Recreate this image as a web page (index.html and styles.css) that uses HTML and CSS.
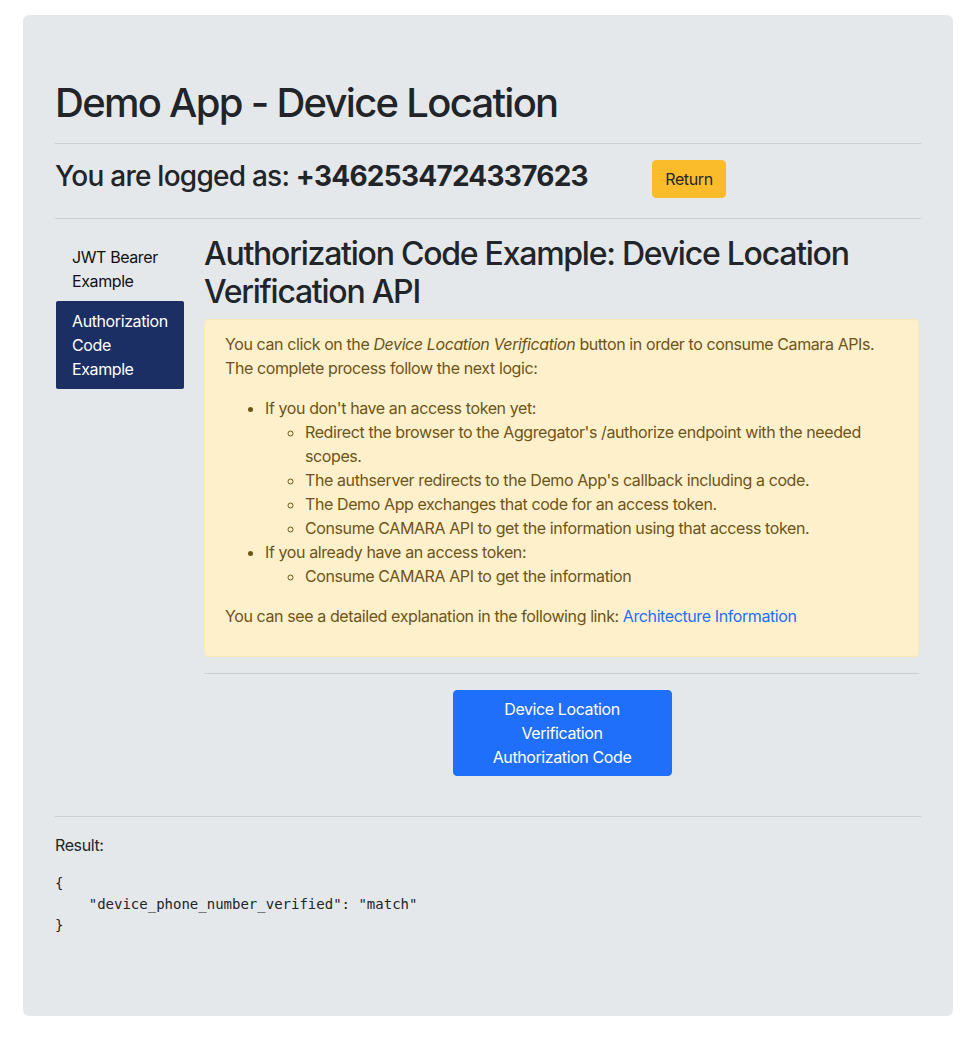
FILE: index.html
```html
<!DOCTYPE html>
<html lang="en">
<head>
<meta charset="utf-8">
<title>Demo App - Device Location</title>
<link rel="stylesheet" href="styles.css">
</head>
<body>
<div class="card">
  <h1 class="title">Demo App - Device Location</h1>
  <hr class="rule">
  <div class="user-row">
    <h3 class="user">You are logged as: <strong>+3462534724337623</strong></h3>
    <button class="btn btn-return">Return</button>
  </div>
  <hr class="rule">
  <div class="main">
    <nav class="pills">
      <a class="pill">JWT Bearer Example</a>
      <a class="pill active">Authorization Code Example</a>
    </nav>
    <section class="content">
      <h2 class="subtitle">Authorization Code Example: Device Location Verification API</h2>
      <div class="alert">
        <p>You can click on the <em>Device Location Verification</em> button in order to consume Camara APIs. The complete process follow the next logic:</p>
        <ul class="steps">
          <li>If you don't have an access token yet:
            <ul class="sub">
              <li>Redirect the browser to the Aggregator's /authorize endpoint with the needed scopes.</li>
              <li>The authserver redirects to the Demo App's callback including a code.</li>
              <li>The Demo App exchanges that code for an access token.</li>
              <li>Consume CAMARA API to get the information using that access token.</li>
            </ul>
          </li>
          <li>If you already have an access token:
            <ul class="sub">
              <li>Consume CAMARA API to get the information</li>
            </ul>
          </li>
        </ul>
        <p>You can see a detailed explanation in the following link: <a class="link">Architecture Information</a></p>
      </div>
      <hr class="rule">
      <div class="actions">
        <button class="btn btn-primary">Device Location Verification Authorization Code</button>
      </div>
    </section>
  </div>
  <hr class="rule">
  <p class="result-label">Result:</p>
  <pre class="result">{
    "device_phone_number_verified": "match"
}</pre>
</div>
</body>
</html>
```

FILE: styles.css
```css
* { box-sizing: border-box; }
html, body { margin: 0; padding: 0; }
body {
  background: #ffffff;
  font-family: "Inter", "Liberation Sans", sans-serif;
  font-size: 16px;
  line-height: 24px;
  letter-spacing: -0.025em;
  color: #212529;
}
.card {
  margin: 15px 0 0 23px;
  width: 930px;
  background: #e5e8eb;
  border-radius: 6px;
  padding: 64px 32px 48px 32px;
}
.title {
  font-size: 40px;
  line-height: 48px;
  font-weight: 500;
  letter-spacing: -0.043em;
  margin: 0 0 8px 0;
}
.rule {
  border: 0;
  border-top: 1px solid #cdd0d3;
  margin: 16px 0;
  height: 0;
}
.user-row {
  display: flex;
  align-items: flex-start;
}
.user {
  flex: 0 0 597px;
  font-size: 28px;
  line-height: 33.6px;
  font-weight: 500;
  letter-spacing: -0.027em;
  margin: 0 0 8px 0;
}
.user strong { font-weight: 700; }
.btn {
  font-family: inherit;
  font-size: 16px;
  line-height: 24px;
  letter-spacing: -0.025em;
  border: 1px solid transparent;
  border-radius: 4px;
  padding: 6px 12px;
  cursor: pointer;
}
.btn-return {
  width: 74px;
  background: #fbbc2c;
  border-color: #fbbc2c;
  color: #212529;
}
.main {
  display: flex;
  gap: 20px;
}
.pills {
  flex: 0 0 129px;
  min-width: 0;
  display: flex;
  flex-direction: column;
  padding-top: 2px;
}
.pill {
  display: block;
  padding: 8px 16px;
  color: #111111;
  border-radius: 2px;
  margin-left: 1px;
}
.pill.active {
  background: #1b2f65;
  color: #ffffff;
}
.content {
  flex: 0 0 715px;
  min-width: 0;
}
.subtitle {
  font-size: 32px;
  line-height: 38.4px;
  font-weight: 500;
  letter-spacing: -0.039em;
  margin: 0 0 8px 0;
}
.alert {
  background: #fdf0cb;
  border: 1px solid #fbe9b6;
  border-radius: 4px;
  color: #6e5418;
  padding: 12px 20px;
  margin-bottom: 16px;
}
.alert p { margin: 0 0 16px 0; }
.steps {
  margin: 0 0 16px 0;
  padding-left: 40px;
  list-style: disc;
}
.sub {
  margin: 0;
  padding-left: 40px;
  list-style: circle;
}
.link { color: #1f6ffb; text-decoration: none; }
.actions {
  display: flex;
  justify-content: center;
  margin-bottom: 24px;
}
.btn-primary {
  width: 219px;
  padding: 6px 22px;
  background: #1f6ffb;
  border-color: #1f6ffb;
  color: #ffffff;
  text-align: center;
  margin-left: 1px;
}
.result-label { margin: 0 0 16px 0; }
.result {
  font-family: "DejaVu Sans Mono", monospace;
  font-size: 14px;
  line-height: 21px;
  letter-spacing: 0;
  margin: 0 0 16px 0;
  color: #212529;
}
.card > .result { margin-bottom: 32px; }
```
